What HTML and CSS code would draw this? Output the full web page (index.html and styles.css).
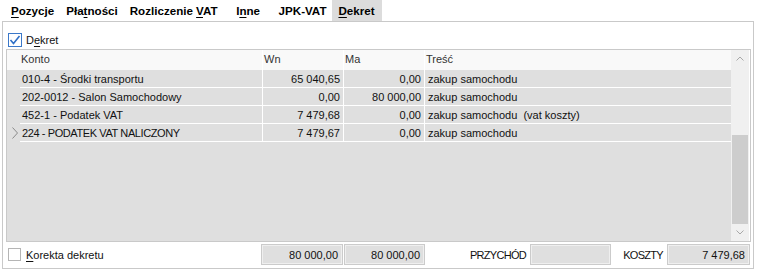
FILE: index.html
```html
<!DOCTYPE html>
<html lang="pl">
<head>
  <meta charset="UTF-8" />
  <title>Dekret</title>
  <link rel="stylesheet" href="styles.css">
</head>
<body>

  <div class="tabs">
    <div class="tab"><span><u>P</u>ozycje</span></div>
    <div class="tab"><span>Pła<u>t</u>ności</span></div>
    <div class="tab"><span>Rozliczenie <u>V</u>AT</span></div>
    <div class="tab tab-inne"><span>I<u>n</u>ne</span></div>
    <div class="tab"><span>JPK-VAT</span></div>
    <div class="tab active"><span><u>D</u>ekret</span></div>
  </div>

  <div class="panel">
    <div class="check-row">
      <svg class="box" width="14" height="14" viewBox="0 0 14 14">
        <rect x="0.5" y="0.5" width="13" height="13" fill="#fff" stroke="#3b78c9"/>
        <polyline points="2.5,7 5.5,10.5 11.5,3" fill="none" stroke="#2f6fc6" stroke-width="1.6"/>
      </svg>
      <span>D<u>e</u>kret</span>
    </div>

    <div class="grid">
      <div class="table">
        <div class="row head">
          <div class="ind"></div>
          <div class="c">Konto</div>
          <div class="c">Wn</div>
          <div class="c">Ma</div>
          <div class="c">Treść</div>
        </div>
        <div class="row">
          <div class="ind"></div>
          <div class="c">010-4 - Środki transportu</div>
          <div class="c num">65 040,65</div>
          <div class="c num">0,00</div>
          <div class="c txt">zakup samochodu</div>
        </div>
        <div class="row">
          <div class="ind"></div>
          <div class="c">202-0012 - Salon Samochodowy</div>
          <div class="c num">0,00</div>
          <div class="c num">80 000,00</div>
          <div class="c txt">zakup samochodu</div>
        </div>
        <div class="row">
          <div class="ind"></div>
          <div class="c">452-1 - Podatek VAT</div>
          <div class="c num">7 479,68</div>
          <div class="c num">0,00</div>
          <div class="c txt">zakup samochodu&nbsp; (vat koszty)</div>
        </div>
        <div class="row">
          <div class="ind">
            <svg width="8" height="12" viewBox="0 0 8 12"><polyline points="1.5,0.5 6.5,6 1.5,11.5" fill="none" stroke="#8a8a8a" stroke-width="1"/></svg>
          </div>
          <div class="c caps">224 - PODATEK VAT NALICZONY</div>
          <div class="c num">7 479,67</div>
          <div class="c num">0,00</div>
          <div class="c txt">zakup samochodu</div>
        </div>
      </div>

      <div class="scrollbar">
        <div class="arrow">
          <svg width="8" height="5" viewBox="0 0 8 5"><polyline points="0.5,4.5 4,1 7.5,4.5" fill="none" stroke="#a8a8a8" stroke-width="1"/></svg>
        </div>
        <div class="track"></div>
        <div class="thumb"></div>
        <div class="arrow">
          <svg width="8" height="5" viewBox="0 0 8 5"><polyline points="0.5,0.5 4,4 7.5,0.5" fill="none" stroke="#a8a8a8" stroke-width="1"/></svg>
        </div>
      </div>
    </div>

    <div class="footer">
      <div class="footer-left">
        <span class="box empty"></span>
        <span><u>K</u>orekta dekretu</span>
      </div>
      <div class="sum w82">80 000,00</div>
      <div class="sum w81 gap">80 000,00</div>
      <div class="lbl w-przychod">PRZYCHÓD</div>
      <div class="sum w81"></div>
      <div class="lbl w-koszty">KOSZTY</div>
      <div class="sum w83">7 479,68</div>
    </div>
  </div>

</body>
</html>
```

FILE: styles.css
```css
body {
  margin: 0;
  font-family: 'Liberation Sans', Arial, sans-serif;
  font-size: 11px;
  color: #111;
  background: white;
  width: 757px;
  height: 271px;
  overflow: hidden;
}

u {
  text-decoration: underline;
  text-underline-offset: 2px;
}

/* zakładki */
.tabs {
  display: flex;
  height: 21px;
  padding-left: 5px;
}

.tab {
  display: flex;
  align-items: center;
  justify-content: center;
  padding: 0 6px;
  font-weight: bold;
  font-size: 11.6px;
  color: #000;
  white-space: nowrap;
}

.tab-inne {
  min-width: 37px;
}

.tab.active {
  background: #dcdcdc;
  padding-right: 7px;
}

/* panel */
.panel {
  box-sizing: border-box;
  height: 248px;
  margin: 0 3px 0 2px;
  border: 1px solid #c9c9c9;
  padding-top: 11px;
}

.check-row {
  display: flex;
  align-items: center;
  height: 14px;
  padding-left: 5px;
  margin-bottom: 2px;
}

.check-row span {
  margin-left: 4px;
}

/* tabela */
.grid {
  box-sizing: border-box;
  display: flex;
  height: 193px;
  margin-left: 3px;
  width: 745px;
  border: 1px solid #c9c9c9;
  padding-right: 1px;
}

.table {
  flex: 1;
  background: #dfdfdf;
}

.row {
  display: grid;
  grid-template-columns: 13px 243px 81px 81px 1fr;
  height: 18px;
}

.row.head {
  height: 20px;
  background: #f9f9f9;
  color: #333;
}

.row.head .c {
  border: none;
  padding-left: 1px;
  padding-bottom: 3px;
}

.c {
  display: flex;
  align-items: center;
  box-sizing: border-box;
  padding-left: 2px;
  border-bottom: 1px solid #fff;
  white-space: nowrap;
  overflow: hidden;
}

.c.caps {
  letter-spacing: -0.4px;
}

.row .c:nth-child(2),
.row .c:nth-child(3),
.row .c:nth-child(4) {
  border-right: 1px solid #fff;
}

.c.num {
  justify-content: flex-end;
  padding-right: 3px;
}

.c.txt {
  padding-left: 3px;
}

.ind {
  display: flex;
  align-items: center;
  padding-left: 4px;
}

.scrollbar {
  width: 18px;
  display: flex;
  flex-direction: column;
  background: #f0f0f0;
}

.arrow {
  height: 17px;
  display: flex;
  align-items: center;
  justify-content: center;
}

.track {
  height: 68px;
}

.thumb {
  flex: 1;
  background: #cdcdcd;
  margin: 0 1px;
}

/* stopka */
.footer {
  display: flex;
  align-items: center;
  margin-top: 2px;
}

.footer-left {
  width: 258px;
  display: flex;
  align-items: center;
  padding-left: 5px;
  box-sizing: border-box;
}

.footer-left span:last-child {
  margin-left: 5px;
}

.box.empty {
  display: inline-block;
  box-sizing: border-box;
  width: 13px;
  height: 13px;
  border: 1px solid #b5b5b5;
  background: #fff;
}

.sum {
  box-sizing: border-box;
  height: 21px;
  background: #dfdfdf;
  border: 1px solid #cbcbcb;
  box-shadow: inset 0 0 0 1px #efefef;
  display: flex;
  align-items: center;
  justify-content: flex-end;
  padding-right: 4px;
}

.w82 { width: 82px; }
.w81 { width: 81px; }
.w83 { width: 83px; }
.gap { margin-left: 1px; }

.lbl {
  text-align: right;
  padding-right: 4px;
  box-sizing: border-box;
  letter-spacing: -0.7px;
}

.w-przychod { width: 105px; }
.w-koszty { width: 56px; }
```
